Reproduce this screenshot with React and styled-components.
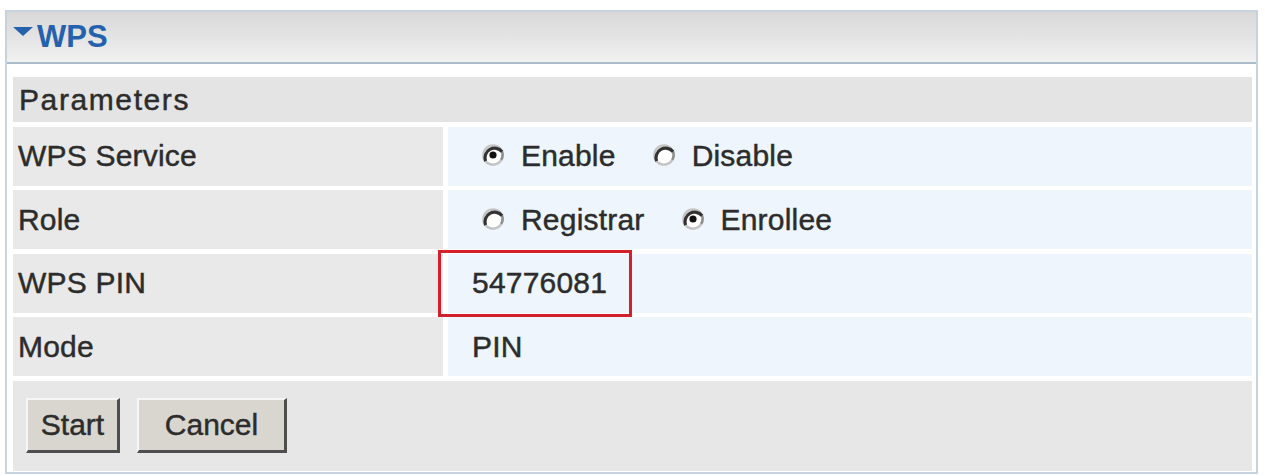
import styled, { createGlobalStyle } from "styled-components";

const GlobalStyle = createGlobalStyle`
  html, body {
    margin: 0;
    padding: 0;
    background: #ffffff;
  }
  body {
    font-family: "Liberation Sans", Arial, sans-serif;
  }
`;

// classic windows radio: dark bevel top-left, light bottom-right
const Radio = ({ checked }) => (
  <RadioIcon viewBox="0 0 22 22" width="22" height="22">
    <circle cx="11" cy="11" r="9.6" fill="#ffffff" stroke="#c4c4c4" strokeWidth="2.4" />
    <path d="M20.05 7.7 A9.6 9.6 0 0 1 19.3 15.8" fill="none" stroke="#8e8e8e" strokeWidth="2.4" />
    <path d="M3.6 17.1 A9.6 9.6 0 0 1 20.05 7.7" fill="none" stroke="#333333" strokeWidth="3.2" />
    {checked && <circle cx="11" cy="11" r="3.6" fill="#111111" />}
  </RadioIcon>
);

const App = () => {
  return (
    <>
      <GlobalStyle />
      <Panel>
        <Header>
          <Caret viewBox="0 0 20 9">
            <polygon points="0,0 20,0 10,9" fill="#2462ad" />
          </Caret>
          <HeaderTitle>WPS</HeaderTitle>
        </Header>
        <Body>
          <Table>
            <SectionTitle>Parameters</SectionTitle>

            <Label>WPS Service</Label>
            <Value $inset>
              <Option>
                <Radio checked />
                <span>Enable</span>
              </Option>
              <Option>
                <Radio />
                <span>Disable</span>
              </Option>
            </Value>

            <Label>Role</Label>
            <Value $inset>
              <Option>
                <Radio />
                <span>Registrar</span>
              </Option>
              <Option>
                <Radio checked />
                <span>Enrollee</span>
              </Option>
            </Value>

            <Label>WPS PIN</Label>
            <Value>
              54776081
              <Highlight />
            </Value>

            <Label>Mode</Label>
            <Value>PIN</Value>

            <ButtonBar>
              <Button $width={94}>Start</Button>
              <Button $width={150}>Cancel</Button>
            </ButtonBar>
          </Table>
        </Body>
      </Panel>
    </>
  );
};

export default App;

const Panel = styled.div`
  box-sizing: border-box;
  width: 1253px;
  height: 464px;
  margin: 10px 0 0 5px;
  border: 2px solid #c6d3df;
  background: #ffffff;
  display: flex;
  flex-direction: column;
`;

const Header = styled.div`
  box-sizing: border-box;
  height: 52px;
  border-bottom: 2px solid #adbccb;
  background: linear-gradient(to bottom, #d8d8d8 0%, #e4e4e4 50%, #f1f1f1 100%);
  display: flex;
  align-items: center;
  padding-left: 6px;
`;

const Caret = styled.svg`
  width: 20px;
  height: 9px;
  margin-right: 4px;
  align-self: flex-start;
  margin-top: 15px;
`;

const HeaderTitle = styled.div`
  color: #2462ad;
  font-size: 31px;
  font-weight: bold;
`;

const Body = styled.div`
  padding: 13px 4px 0 6px;
`;

const Table = styled.div`
  display: grid;
  grid-template-columns: 430px 1fr;
  grid-template-rows: 45px repeat(4, 59px) 90px;
  column-gap: 5px;
  row-gap: 4.5px;
  font-size: 30px;
  letter-spacing: 0.2px;
  color: #2c2c2c;
  -webkit-text-stroke: 0.45px #2c2c2c;
`;

const SectionTitle = styled.div`
  grid-column: 1 / -1;
  background: #e4e4e4;
  display: flex;
  align-items: center;
  padding-left: 6px;
  letter-spacing: 1.6px;
`;

const Label = styled.div`
  background: #e9e9e9;
  display: flex;
  align-items: center;
  padding-left: 5px;
`;

const Value = styled.div`
  position: relative;
  background: #eef5fc;
  display: flex;
  align-items: center;
  padding-left: ${(p) => (p.$inset ? "34px" : "24px")};
`;

const Option = styled.label`
  display: flex;
  align-items: center;
  margin-right: 37px;
  span {
    margin-left: 17px;
  }
`;

const RadioIcon = styled.svg`
  display: block;
  width: 22px;
  height: 22px;
  min-width: 22px;
  flex: none;
  margin-top: -2px;
`;

const Highlight = styled.div`
  position: absolute;
  left: -10px;
  top: -3.5px;
  width: 194px;
  height: 67px;
  box-sizing: border-box;
  border: 3px solid #d3202b;
  pointer-events: none;
`;

const ButtonBar = styled.div`
  grid-column: 1 / -1;
  background: #e7e7e7;
  display: flex;
  align-items: center;
  gap: 17px;
  padding-left: 13px;
`;

const Button = styled.button`
  box-sizing: border-box;
  width: ${(p) => p.$width}px;
  height: 55px;
  padding: 0;
  background: #d9d6d0;
  border-style: solid;
  border-width: 2px 3px 3px 2px;
  border-color: #f6f6f6 #4e4e4e #4e4e4e #f6f6f6;
  font-family: "Liberation Sans", Arial, sans-serif;
  font-size: 30px;
  color: #2c2c2c;
  -webkit-text-stroke: 0.45px #2c2c2c;
`;
